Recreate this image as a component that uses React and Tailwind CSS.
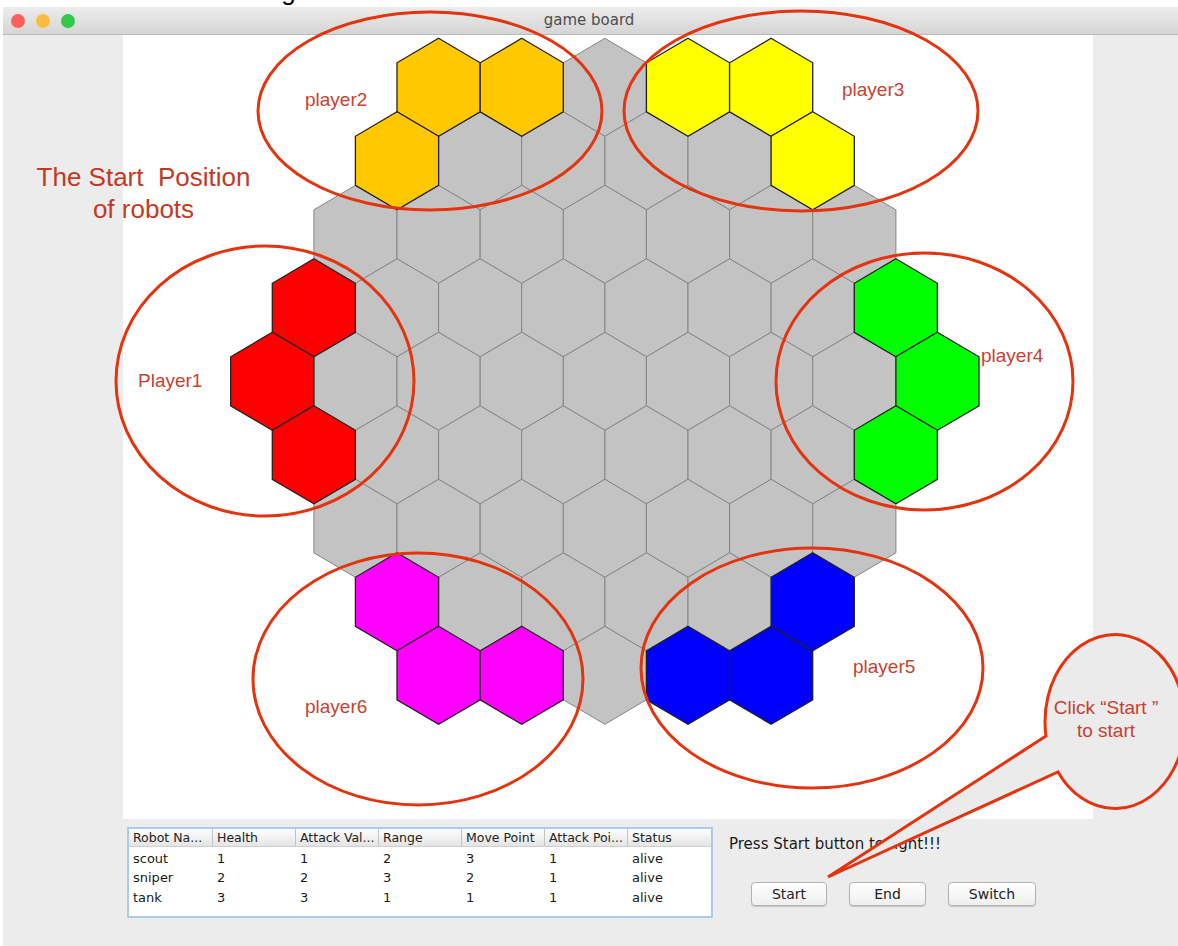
import React from "react";

const R = 49;
const HW = 41.57;
const ROW0 = 38.3;
const DY = 73.5;
const DX = 83.14;

const special = {
  "0-0": "#ffc800", "0-1": "#ffc800", "1-0": "#ffc800",
  "0-3": "#ffff00", "0-4": "#ffff00", "1-5": "#ffff00",
  "3-0": "#ff0000", "4-0": "#ff0000", "5-0": "#ff0000",
  "3-7": "#00ff00", "4-8": "#00ff00", "5-7": "#00ff00",
  "7-0": "#ff00ff", "8-0": "#ff00ff", "8-1": "#ff00ff",
  "7-5": "#0000ff", "8-3": "#0000ff", "8-4": "#0000ff",
};

const cells = [];
for (let r = 0; r < 9; r++) {
  const off = Math.abs(r - 4);
  const n = 9 - off;
  const cy = ROW0 + DY * r + R;
  for (let i = 0; i < n; i++) {
    const cx = 272.3 + (off * DX) / 2 + i * DX;
    cells.push({ key: `${r}-${i}`, cx, cy, color: special[`${r}-${i}`] });
  }
}

function pts(cx, cy) {
  return [
    [cx, cy - R],
    [cx + HW, cy - R / 2],
    [cx + HW, cy + R / 2],
    [cx, cy + R],
    [cx - HW, cy + R / 2],
    [cx - HW, cy - R / 2],
  ]
    .map((p) => p.map((v) => v.toFixed(1)).join(","))
    .join(" ");
}

function Board() {
  return (
    <svg width="970" height="784" viewBox="123 35 970 784" className="block">
      {cells
        .filter((c) => !c.color)
        .map((c) => (
          <polygon key={c.key} points={pts(c.cx, c.cy)} fill="#c3c3c3" stroke="#858585" strokeWidth="1" />
        ))}
      {cells
        .filter((c) => c.color)
        .map((c) => (
          <polygon key={c.key} points={pts(c.cx, c.cy)} fill={c.color} stroke="#222" strokeWidth="1.3" />
        ))}
    </svg>
  );
}

const headers = ["Robot Na...", "Health", "Attack Val...", "Range", "Move Point", "Attack Poi...", "Status"];
const rows = [
  ["scout", "1", "1", "2", "3", "1", "alive"],
  ["sniper", "2", "2", "3", "2", "1", "alive"],
  ["tank", "3", "3", "1", "1", "1", "alive"],
];

function Btn({ w, children }) {
  return (
    <div
      className={`${w} h-[24px] flex items-center justify-center rounded-[4px] border border-[#b3b3b3] bg-gradient-to-b from-white to-[#efefef] shadow-[0_1px_1px_rgba(0,0,0,0.18)] text-[14px] text-[#222]`}
    >
      {children}
    </div>
  );
}

const labelCls = "absolute text-[19px] leading-[20px] text-[#c8412f] font-['Liberation_Sans',Arial,sans-serif] whitespace-nowrap";

export default function App() {
  return (
    <div className="relative w-[1178px] h-[946px] bg-white overflow-hidden font-['DejaVu_Sans',sans-serif]">
      <div className="relative h-[7px] overflow-hidden">
        <span className="absolute left-[8px] top-[-22px] text-[26px] leading-[26px] text-black font-['Liberation_Sans',Arial,sans-serif] whitespace-nowrap">
          Click button to start the game
        </span>
      </div>
      <div className="ml-[3px] h-[939px] flex flex-col">
        <div className="h-[28px] grid grid-cols-[1fr_auto_1fr] items-center bg-gradient-to-b from-[#ececec] to-[#d5d5d5] border-b border-[#b8b8b8]">
          <div className="flex items-center gap-[11px] pl-[8px]">
            <div className="w-[14px] h-[14px] rounded-full bg-[#fc605c]" />
            <div className="w-[14px] h-[14px] rounded-full bg-[#fdbc40]" />
            <div className="w-[14px] h-[14px] rounded-full bg-[#34c84a]" />
          </div>
          <div className="text-[15px] text-[#4d4d4d] pr-[3px]">game board</div>
          <div />
        </div>
        <div className="flex-1 flex flex-col bg-[#ececec]">
          <div className="flex h-[784px]">
            <div className="w-[120px]" />
            <div className="w-[970px] bg-white">
              <Board />
            </div>
            <div className="flex-1" />
          </div>
          <div className="flex-1 flex items-start pl-[124px] pt-[8px]">
            <div className="w-[586px] h-[91px] border-2 border-[#a9cbef] bg-white">
              <div className="grid grid-cols-[repeat(7,83px)] h-[18px] bg-gradient-to-b from-white to-[#e4e4e4] border-b border-[#cfcfcf] text-[12.5px] leading-[18px] text-[#222]">
                {headers.map((h, i) => (
                  <div key={h} className={`${i === 0 ? "pl-[4px]" : "pl-[4px] border-l border-[#c4c4c4]"} whitespace-nowrap overflow-hidden`}>
                    {h}
                  </div>
                ))}
              </div>
              <div className="pt-[2px]">
                {rows.map((r) => (
                  <div key={r[0]} className="grid grid-cols-[repeat(7,83px)] h-[19.3px] text-[13px] leading-[19px] text-[#1a1a1a]">
                    {r.map((c, i) => (
                      <div key={i} className={i === 0 ? "pl-[4px]" : "pl-[5px]"}>
                        {c}
                      </div>
                    ))}
                  </div>
                ))}
              </div>
            </div>
            <div className="ml-[16px] flex flex-col">
              <div className="mt-[8px] text-[15px] leading-[18px] text-[#1a1a1a] whitespace-nowrap">Press Start button to fight!!!</div>
              <div className="mt-[29px] ml-[22px] flex gap-[22px]">
                <Btn w="w-[76px]">Start</Btn>
                <Btn w="w-[77px]">End</Btn>
                <Btn w="w-[88px]">Switch</Btn>
              </div>
            </div>
          </div>
        </div>
      </div>

      <svg className="absolute left-0 top-0 pointer-events-none" width="1178" height="946" viewBox="0 0 1178 946">
        <g fill="none" stroke="#e3340f" strokeWidth="3">
          <ellipse cx="430" cy="111" rx="172" ry="99" />
          <ellipse cx="801" cy="111" rx="177" ry="100" />
          <ellipse cx="265" cy="381" rx="149" ry="135" />
          <ellipse cx="924.5" cy="381.5" rx="148.5" ry="128.5" />
          <ellipse cx="418" cy="679" rx="165" ry="126" />
          <ellipse cx="812" cy="668" rx="171" ry="120" />
        </g>
        <path
          d="M 1046 736 L 828 877 L 1058 772 A 70 87 0 1 0 1046 736 Z"
          fill="#ebebeb"
          stroke="#e3340f"
          strokeWidth="3"
          strokeLinejoin="miter"
        />
      </svg>

      <div className={labelCls} style={{ left: 305, top: 90 }}>player2</div>
      <div className={labelCls} style={{ left: 842, top: 80 }}>player3</div>
      <div className={labelCls} style={{ left: 138, top: 371 }}>Player1</div>
      <div className={labelCls} style={{ left: 981, top: 346 }}>player4</div>
      <div className={labelCls} style={{ left: 305, top: 697 }}>player6</div>
      <div className={labelCls} style={{ left: 853, top: 657 }}>player5</div>

      <div className="absolute left-[20px] top-[161px] w-[247px] text-center text-[26px] leading-[32px] text-[#c23a22] font-['Liberation_Sans',Arial,sans-serif] whitespace-pre">
        {"The Start  Position\nof robots"}
      </div>
      <div className="absolute left-[1046px] top-[696px] w-[120px] text-center text-[19px] leading-[23px] text-[#c8412f] font-['Liberation_Sans',Arial,sans-serif] whitespace-pre">
        {"Click \u201cStart \u201d\nto start"}
      </div>
    </div>
  );
}
